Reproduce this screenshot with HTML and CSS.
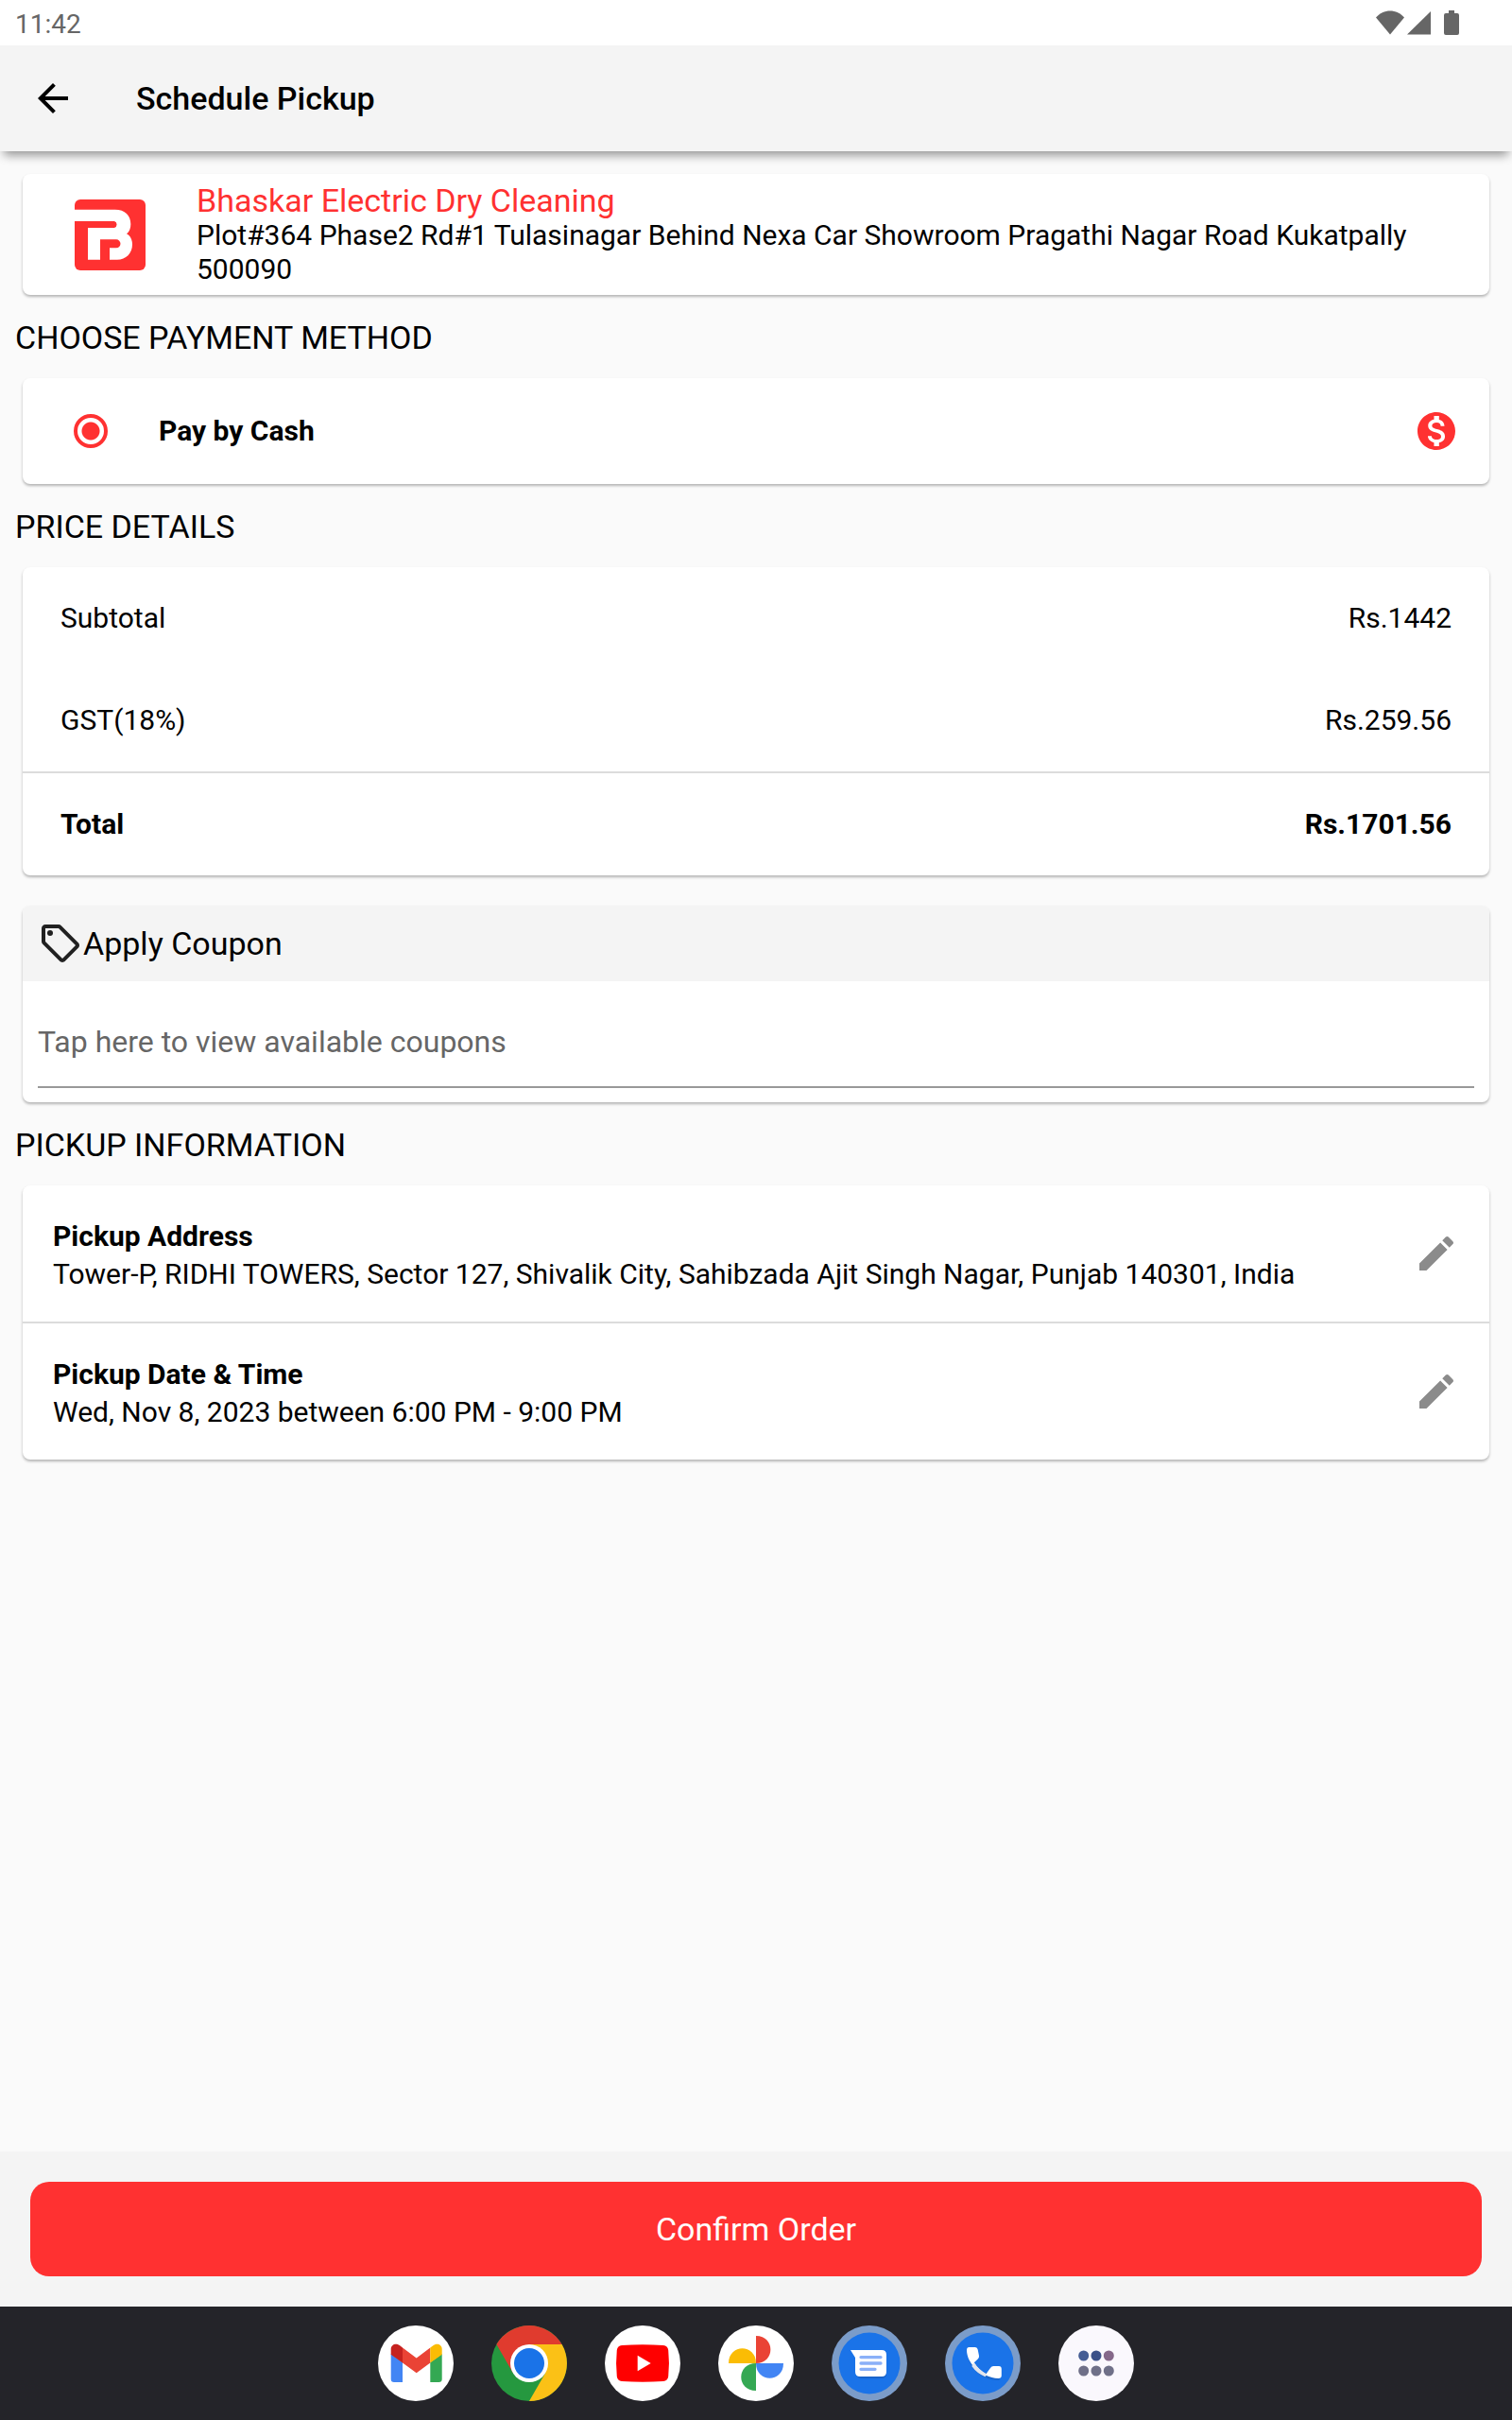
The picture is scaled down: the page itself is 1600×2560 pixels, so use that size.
FILE: index.html
```html
<!DOCTYPE html>
<html lang="en">
<head>
<meta charset="utf-8">
<meta name="viewport" content="width=device-width, initial-scale=1">
<title>Schedule Pickup</title>
<link rel="stylesheet" href="styles.css">
</head>
<body>
<div class="status-bar">
  <time class="clock">11:42</time>
  <svg class="status-icons" viewBox="0 0 88 26" aria-hidden="true">
    <path d="M0 7.500C8-2 22-2 30 7.500L15 25.500z"/>
    <path d="M33 25.500L58 1v24.500z"/>
    <path d="M77 0h6v3h3q2 0 2 2v19q0 2-2 2H74q-2 0-2-2V5q0-2 2-2h3z"/>
  </svg>
</div>

<header class="app-bar">
  <button class="icon-button" type="button" aria-label="Back">
    <svg class="icon" viewBox="0 0 24 24"><path d="M20 11H7.830l5.590-5.590L12 4l-8 8 8 8 1.410-1.410L7.830 13H20v-2z"/></svg>
  </button>
  <h1 class="page-title">Schedule Pickup</h1>
</header>

<main class="content">
  <section class="card shop">
    <svg class="shop-logo" viewBox="0 0 225 225" aria-hidden="true">
      <rect width="225" height="225" rx="18" fill="#ff3131"/>
      <path fill="#fff" d="M0 32H128C160 32 178 50 178 78C178 92 174 102 165 109C177 116 183 127 183 143C183 170 163 191 135 191H111V154H132A13 13 0 0 0 132 127H81V191H42V90H126A11 11 0 0 0 126 69H0z"/>
    </svg>
    <div>
      <h2 class="shop-name">Bhaskar Electric Dry Cleaning</h2>
      <p class="shop-address">Plot#364 Phase2 Rd#1 Tulasinagar Behind Nexa Car Showroom Pragathi Nagar Road Kukatpally 500090</p>
    </div>
  </section>

  <h2 class="section-title">CHOOSE PAYMENT METHOD</h2>
  <section class="card payment">
    <input class="radio" type="radio" name="payment" id="cash" checked>
    <label class="payment-label" for="cash">Pay by Cash</label>
    <svg class="icon icon-cash" viewBox="0 0 24 24" aria-hidden="true"><path d="M12 2C6.480 2 2 6.480 2 12s4.480 10 10 10 10-4.480 10-10S17.520 2 12 2zm1.410 16.090V20h-2.670v-1.930c-1.710-.36-3.160-1.460-3.270-3.400h1.960c.1 1.050.82 1.870 2.650 1.870 1.960 0 2.400-.98 2.400-1.590 0-.83-.44-1.610-2.670-2.140-2.480-.6-4.180-1.620-4.180-3.670 0-1.720 1.390-2.840 3.110-3.210V4h2.670v1.950c1.860.45 2.790 1.860 2.850 3.390H14.300c-.05-1.110-.64-1.870-2.220-1.870-1.500 0-2.400.68-2.400 1.640 0 .84.65 1.390 2.670 1.910s4.180 1.390 4.180 3.910c-.01 1.830-1.380 2.830-3.120 3.160z"/></svg>
  </section>

  <h2 class="section-title">PRICE DETAILS</h2>
  <section class="card">
    <table class="prices">
      <tbody>
        <tr><th scope="row">Subtotal</th><td>Rs.1442</td></tr>
        <tr><th scope="row">GST(18%)</th><td>Rs.259.56</td></tr>
      </tbody>
      <tfoot>
        <tr><th scope="row">Total</th><td>Rs.1701.56</td></tr>
      </tfoot>
    </table>
  </section>

  <section class="card coupon">
    <label class="coupon-title" for="coupon">
      <svg class="icon icon-tag" viewBox="0 0 24 24" aria-hidden="true"><path d="M21.410 11.580l-9-9C12.050 2.220 11.550 2 11 2H4c-1.100 0-2 .9-2 2v7c0 .55.22 1.050.59 1.420l9 9c.36.36.86.58 1.410.58s1.050-.22 1.410-.59l7-7c.37-.36.59-.86.59-1.410s-.23-1.060-.59-1.420zM13 20.010L4 11V4h7v-.01l9 9-7 7.020z"/><circle cx="6.500" cy="6.500" r="1.500"/></svg>
      Apply Coupon
    </label>
    <input class="coupon-input" id="coupon" type="text" placeholder="Tap here to view available coupons" readonly>
  </section>

  <h2 class="section-title">PICKUP INFORMATION</h2>
  <section class="card">
    <div class="pickup-row">
      <div>
        <h3 class="pickup-title">Pickup Address</h3>
        <p class="pickup-text">Tower-P, RIDHI TOWERS, Sector 127, Shivalik City, Sahibzada Ajit Singh Nagar, Punjab 140301, India</p>
      </div>
      <button class="icon-button" type="button" aria-label="Edit pickup address">
        <svg class="icon icon-edit" viewBox="0 0 24 24"><path d="M3 17.250V21h3.750L17.810 9.940l-3.750-3.750L3 17.250zM20.710 7.040c.39-.39.39-1.020 0-1.410l-2.340-2.340c-.39-.39-1.020-.39-1.410 0l-1.830 1.830 3.750 3.750 1.830-1.830z"/></svg>
      </button>
    </div>
    <div class="pickup-row">
      <div>
        <h3 class="pickup-title">Pickup Date &amp; Time</h3>
        <p class="pickup-text">Wed, Nov 8, 2023 between 6:00 PM - 9:00 PM</p>
      </div>
      <button class="icon-button" type="button" aria-label="Edit pickup date and time">
        <svg class="icon icon-edit" viewBox="0 0 24 24"><path d="M3 17.250V21h3.750L17.810 9.940l-3.750-3.750L3 17.250zM20.710 7.040c.39-.39.39-1.020 0-1.410l-2.340-2.340c-.39-.39-1.020-.39-1.410 0l-1.830 1.830 3.750 3.750 1.830-1.830z"/></svg>
      </button>
    </div>
  </section>
</main>

<footer class="actions">
  <button class="confirm" type="button">Confirm Order</button>
</footer>

<nav class="dock" aria-label="Apps">
  <button class="app" type="button" aria-label="Gmail">
    <svg viewBox="0 0 80 80">
      <circle cx="40" cy="40" r="40" fill="#fff"/>
      <path fill="#4285f4" d="M13.700 30L26 39V60H17q-3.300 0-3.300-3.300z"/>
      <path fill="#34a853" d="M55.300 39L67.700 30V56.700Q67.700 60 64.400 60H55.300z"/>
      <path fill="#ea4335" d="M26 23.500L40.700 34.500L55.300 23.500V39.500L40.700 50.300L26 39.500z"/>
      <path fill="#c5221f" d="M13.700 25C13.700 20 19.500 18 23.500 21.500L26 23.500V39.500L13.700 30.700z"/>
      <path fill="#fbbc04" d="M67.700 25C67.700 20 62 18 58 21.500L55.300 23.500V39.500L67.700 30.700z"/>
    </svg>
  </button>
  <button class="app" type="button" aria-label="Chrome">
    <svg viewBox="0 0 80 80">
      <circle cx="40" cy="40" r="40" fill="#25983f"/>
      <path fill="#fbc116" d="M40 20H74.600A40 40 0 0 1 40 80L57.300 50L40 40z"/>
      <path fill="#e03b2e" d="M5.400 20A40 40 0 0 1 74.600 20H40V40L22.700 50z"/>
      <circle cx="40" cy="40" r="20" fill="#fff"/>
      <circle cx="40" cy="40" r="16" fill="#1a73e8"/>
    </svg>
  </button>
  <button class="app" type="button" aria-label="YouTube">
    <svg viewBox="0 0 80 80">
      <circle cx="40" cy="40" r="40" fill="#fff"/>
      <path fill="#f00" d="M18 21Q40 19.500 62 21Q66.500 21.300 67.200 26Q68.700 40 67.200 54Q66.500 58.700 62 59Q40 60.500 18 59Q13.500 58.700 12.800 54Q11.300 40 12.800 26Q13.500 21.300 18 21z"/>
      <path fill="#fff" d="M34.700 31.800L48.700 40L34.700 48.200z"/>
    </svg>
  </button>
  <button class="app" type="button" aria-label="Photos">
    <svg viewBox="0 0 80 80">
      <circle cx="40" cy="40" r="40" fill="#fff"/>
      <path fill="#ea4335" d="M40 11C60.500 11 60.500 40 40 40z"/>
      <path fill="#fbbc04" d="M11 40C11 19 40 19 40 40z"/>
      <path fill="#4285f4" d="M40 40H69C69 61 40 61 40 40z"/>
      <path fill="#34a853" d="M40 40V69C19 69 19 40 40 40z"/>
    </svg>
  </button>
  <button class="app" type="button" aria-label="Messages">
    <svg viewBox="0 0 80 80">
      <circle cx="40" cy="40" r="40" fill="#7b9cc9"/>
      <circle cx="40" cy="40" r="32.500" fill="#1a73e8"/>
      <path fill="#1a65cb" d="M26 50Q26 56 32 56H53Q58 56 58 51z"/>
      <path fill="#fff" d="M20 26H53Q58 26 58 31V49Q58 54 53 54H30Q25 54 25 49V34z"/>
      <path stroke="#8ab0f8" stroke-width="3.300" stroke-linecap="round" d="M31 33.600H52M31 40H52M31 46.300H46"/>
    </svg>
  </button>
  <button class="app" type="button" aria-label="Phone">
    <svg viewBox="0 0 80 80">
      <circle cx="40" cy="40" r="40" fill="#7b9cc9"/>
      <circle cx="40" cy="40" r="32.500" fill="#1a73e8"/>
      <path fill="#1557b0" opacity=".5" d="M25 36Q33 57 57 58L59 54L40 50z"/>
      <path fill="#fff" d="M25.500 23H32Q34.300 23 34.700 25.500L36 32Q36.300 34 35 35.300L30.800 39.300Q35.500 47 43.500 51.300L48 45Q49.300 43 51.300 43H57Q59.800 43 59.800 46V53Q59.800 56 56.500 56C38 55 23 40 23 26Q23 23 25.500 23z"/>
      <path fill="#e2e5ec" d="M30.800 39.300L28.300 43Q33.500 50.500 42.500 54.200L44.500 51.800Q35.500 47 30.800 39.300z"/>
    </svg>
  </button>
  <button class="app" type="button" aria-label="All apps">
    <svg viewBox="0 0 80 80">
      <circle cx="40" cy="40" r="40" fill="#faf8fd"/>
      <circle cx="26.700" cy="32" r="5.500" fill="#465e95"/>
      <circle cx="40" cy="32" r="5.500" fill="#3b5089"/>
      <circle cx="53.300" cy="32" r="5.500" fill="#85688a"/>
      <g fill="#6f7088"><circle cx="26.700" cy="48" r="5.500"/><circle cx="40" cy="48" r="5.500"/><circle cx="53.300" cy="48" r="5.500"/></g>
    </svg>
  </button>
</nav>
</body>
</html>
```

FILE: styles.css
```css
* {
  box-sizing: border-box;
  margin: 0;
}

:root {
  --red: #ff3131;
  --surface: #f4f4f4;
  --divider: #dcdcdc;
}

body {
  display: flex;
  flex-direction: column;
  min-height: 100vh;
  background: #fafafa;
  color: #000;
  font: 400 30px/36px Roboto, sans-serif;
}

button,
input {
  font: inherit;
}

h1,
h2,
h3 {
  font-weight: 400;
}

svg {
  display: block;
}

.icon {
  flex: none;
  width: 48px;
  height: 48px;
}

.icon-button {
  flex: none;
  padding: 0;
  border: 0;
  background: none;
}

/* Status bar */
.status-bar {
  display: flex;
  align-items: center;
  justify-content: space-between;
  height: 48px;
  padding: 0 56px 0 16px;
  background: #fff;
  color: #666;
}

.clock {
  padding-top: 3px;
  font-size: 28px;
}

.status-icons {
  width: 88px;
  height: 26px;
  fill: #666;
}

/* App bar */
.app-bar {
  display: flex;
  align-items: center;
  gap: 64px;
  height: 112px;
  padding: 0 32px;
  background: var(--surface);
  box-shadow: 0 8px 10px -4px rgba(0, 0, 0, .42);
}

.page-title {
  font-size: 34px;
  font-weight: 500;
}

/* Cards */
.content {
  flex: 1;
  padding: 24px;
}

.card {
  overflow: hidden;
  border-radius: 8px;
  background: #fff;
  box-shadow: 0 2px 3px rgba(0, 0, 0, .28);
}

.section-title {
  margin: 0 -8px;
  padding: 25px 0 23px;
  font-size: 34px;
  line-height: 40px;
}

.shop {
  display: flex;
  align-items: center;
  gap: 54px;
  padding: 9px 32px 9px 55px;
}

.shop-logo {
  flex: none;
  width: 75px;
  height: 75px;
}

.shop-name {
  color: var(--red);
  font-size: 34px;
  line-height: 38px;
}

.payment {
  display: flex;
  align-items: center;
  gap: 54px;
  padding: 32px 32px 32px 54px;
}

.radio {
  flex: none;
  width: 36px;
  height: 36px;
  margin: 0;
  border: 4px solid var(--red);
  border-radius: 50%;
  appearance: none;
}

.radio:checked {
  background: radial-gradient(circle, var(--red) 9px, transparent 10px);
}

.payment-label {
  flex: 1;
  font-weight: 700;
}

.icon-cash {
  fill: var(--red);
}

/* Prices */
.prices {
  width: 100%;
  border-spacing: 0;
}

.prices th,
.prices td {
  padding: 36px 40px;
  font-weight: 400;
  text-align: left;
}

.prices td {
  text-align: right;
}

.prices tfoot th,
.prices tfoot td {
  border-top: 2px solid var(--divider);
  font-weight: 700;
}

/* Coupon */
.coupon {
  margin-top: 32px;
  padding-bottom: 15px;
}

.coupon-title {
  display: flex;
  align-items: center;
  height: 80px;
  padding: 0 16px;
  background: var(--surface);
  font-size: 34px;
}

.icon-tag {
  fill: #212121;
}

.coupon-input {
  display: block;
  width: calc(100% - 32px);
  height: 113px;
  margin: 0 16px;
  padding: 16px 0 0;
  border: 0;
  border-bottom: 2px solid #999;
  background: none;
  font-size: 32px;
}

.coupon-input::placeholder {
  color: #666;
  opacity: 1;
}

/* Pickup */
.pickup-row {
  display: flex;
  align-items: center;
  justify-content: space-between;
  gap: 32px;
  height: 144px;
  padding: 0 32px;
}

.pickup-row + .pickup-row {
  height: 146px;
  border-top: 2px solid var(--divider);
}

.pickup-title,
.pickup-text {
  padding-top: 4px;
  font-size: 30px;
}

.pickup-title {
  font-weight: 700;
}

.icon-edit {
  fill: #8b8b8b;
}

/* Footer */
.actions {
  padding: 32px;
  background: var(--surface);
}

.confirm {
  display: block;
  width: 100%;
  height: 100px;
  border: 0;
  border-radius: 20px;
  background: var(--red);
  color: #fff;
  font-size: 34px;
}

.dock {
  display: flex;
  justify-content: center;
  gap: 40px;
  padding: 20px;
  background: #242429;
}

.app {
  width: 80px;
  height: 80px;
  padding: 0;
  border: 0;
  border-radius: 50%;
  background: none;
}
```
